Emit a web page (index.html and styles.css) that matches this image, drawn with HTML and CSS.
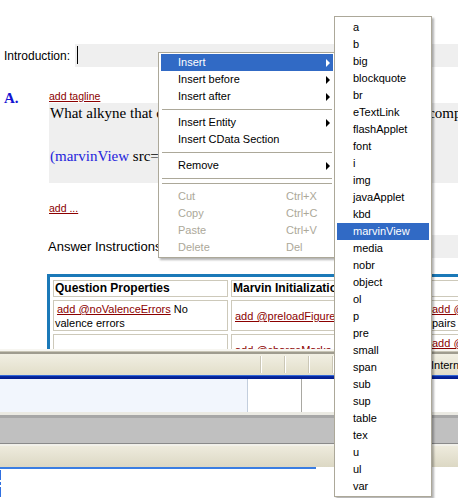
FILE: index.html
```html
<!DOCTYPE html>
<html lang="en">
<head>
    <meta charset="UTF-8">
    <meta name="viewport" content="width=device-width, initial-scale=1.0">
    <title>Question Editor</title>
    <link rel="stylesheet" href="styles.css">
</head>
<body>
    <div class="editor">
        <div class="doc">
            <div class="intro-row">
                <span class="field-label">Introduction:</span>
                <div class="field"><span class="caret"></span></div>
            </div>

            <div class="question">
                <div class="q-num">A.</div>
                <div class="q-body">
                    <a class="add-link" href="#">add tagline</a>
                    <div class="q-text">
                        <p>What alkyne that can be catalytically hydrogenated to give the compound shown?</p>
                        <p class="q-tag"><span class="tag">(marvinView</span> src="structure.mrv"</p>
                    </div>
                    <a class="add-link add-more" href="#">add ...</a>

                    <div class="answer-row">
                        <span class="answer-label">Answer Instructions</span>
                        <div class="field answer-field"></div>
                    </div>

                    <table class="props">
                        <tr>
                            <th class="col-props">Question Properties</th>
                            <th class="col-init">Marvin Initialization</th>
                            <th class="col-disp"></th>
                        </tr>
                        <tr>
                            <td><a class="add-link cell-link" href="#">add @noValenceErrors</a> No valence errors</td>
                            <td><a class="add-link cell-link" href="#">add @preloadFigure</a></td>
                            <td><a class="add-link" href="#">add @lonePairs</a> Show lone<br>pairs</td>
                        </tr>
                        <tr>
                            <td>&nbsp;</td>
                            <td><a class="add-link cell-link" href="#">add @chargeMarks</a></td>
                            <td><a class="add-link" href="#">add @implicitH</a><br>Implicit H</td>
                        </tr>
                    </table>
                </div>
            </div>
        </div>

        <div class="panel">
            <div class="p-edge"></div>
            <div class="p-edge-dark"></div>
            <div class="toolbar">
                <span class="tb-btn"></span>
                <span class="tb-btn"></span>
                <span class="tb-btn"></span>
                <span class="tb-btn"></span>
                <span class="tb-label">Internet</span>
            </div>
            <div class="p-bluebar"></div>
            <div class="list-row">
                <div class="lr-a"></div>
                <div class="lr-b"></div>
                <div class="lr-c"></div>
            </div>
            <div class="p-light"></div>
            <div class="p-mid"></div>
            <div class="p-gray"></div>
            <div class="p-groove"></div>
            <div class="p-beige"></div>
            <div class="p-blueline"></div>
            <div class="p-white">
                <div class="marks">
                    <span class="mark m1"></span>
                    <span class="mark m2"></span>
                    <span class="mark m3"></span>
                </div>
            </div>
        </div>
    </div>

    <!-- context menu -->
    <div class="menu">
        <div class="menu-item active has-sub">Insert</div>
        <div class="menu-item has-sub">Insert before</div>
        <div class="menu-item has-sub">Insert after</div>
        <div class="menu-sep"></div>
        <div class="menu-item has-sub">Insert Entity</div>
        <div class="menu-item">Insert CData Section</div>
        <div class="menu-sep"></div>
        <div class="menu-item has-sub">Remove</div>
        <div class="menu-sep"></div>
        <div class="menu-sep"></div>
        <div class="menu-item disabled">Cut<span class="key">Ctrl+X</span></div>
        <div class="menu-item disabled">Copy<span class="key">Ctrl+C</span></div>
        <div class="menu-item disabled">Paste<span class="key">Ctrl+V</span></div>
        <div class="menu-item disabled">Delete<span class="key">Del</span></div>
    </div>

    <!-- Insert submenu -->
    <div class="menu submenu">
        <div class="menu-item">a</div>
        <div class="menu-item">b</div>
        <div class="menu-item">big</div>
        <div class="menu-item">blockquote</div>
        <div class="menu-item">br</div>
        <div class="menu-item">eTextLink</div>
        <div class="menu-item">flashApplet</div>
        <div class="menu-item">font</div>
        <div class="menu-item">i</div>
        <div class="menu-item">img</div>
        <div class="menu-item">javaApplet</div>
        <div class="menu-item">kbd</div>
        <div class="menu-item active">marvinView</div>
        <div class="menu-item">media</div>
        <div class="menu-item">nobr</div>
        <div class="menu-item">object</div>
        <div class="menu-item">ol</div>
        <div class="menu-item">p</div>
        <div class="menu-item">pre</div>
        <div class="menu-item">small</div>
        <div class="menu-item">span</div>
        <div class="menu-item">sub</div>
        <div class="menu-item">sup</div>
        <div class="menu-item">table</div>
        <div class="menu-item">tex</div>
        <div class="menu-item">u</div>
        <div class="menu-item">ul</div>
        <div class="menu-item">var</div>
    </div>
</body>
</html>
```

FILE: styles.css
```css
body {
    margin: 0;
    background: #fff;
    color: #000;
    font-family: "Liberation Sans", Arial, sans-serif;
    overflow: hidden;
}
.editor {
    height: 498px;
    display: flex;
    flex-direction: column;
    overflow: hidden;
}

/* document area */
.doc {
    height: 349px;
    flex-shrink: 0;
    overflow: hidden;
    padding: 44px 0 0 4px;
    box-sizing: border-box;
}
.intro-row {
    display: flex;
    align-items: center;
    height: 23px;
}
.field-label {
    font-size: 12px;
    margin-right: 5px;
}
.field {
    flex: 1;
    align-self: stretch;
    background: #efefef;
}
.caret {
    display: block;
    width: 1px;
    height: 18px;
    margin: 2px 0 0 2px;
    background: #000;
}

.question {
    display: grid;
    grid-template-columns: 45px 1fr;
    margin-top: 23px;
}
.q-num {
    font: bold 15px/17px "Liberation Serif", "Times New Roman", serif;
    color: #1414d2;
}
.q-body {
    min-width: 0;
}
.add-link {
    font-size: 10.5px;
    line-height: 13px;
    color: #8b0000;
    text-decoration: underline;
}
.q-body > .add-link {
    display: block;
}
.q-text {
    background: #efefef;
    padding: 2px 1px 18px;
    font: 15px/17px "Liberation Serif", "Times New Roman", serif;
}
.q-text p {
    margin: 0;
    white-space: nowrap;
}
.q-text .q-tag {
    margin-top: 26px;
}
.tag {
    color: #2424dc;
}
.add-more {
    margin-top: 19px;
}

.answer-row {
    display: flex;
    align-items: center;
    height: 23px;
    margin-top: 20px;
}
.answer-label {
    font-size: 13px;
    margin-left: -1px;
    white-space: nowrap;
}
.answer-field {
    margin-left: 6px;
}

/* properties table */
.props {
    margin: 16px 0 0 -2px;
    border: 3px solid #1b79b8;
    border-spacing: 3px;
    table-layout: fixed;
    width: 550px;
}
.props th,
.props td {
    border: 1px solid #cdc9ba;
    box-sizing: border-box;
    text-align: left;
    vertical-align: middle;
    white-space: nowrap;
}
.props th {
    font-size: 12px;
    line-height: 15px;
    padding: 0 1px;
}
.props td {
    font-size: 11px;
    line-height: 14px;
    padding: 1px 1px 0;
    white-space: normal;
}
.props .add-link {
    font-size: 11px;
    line-height: 14px;
}
.col-props { width: 175px; }
.col-init { width: 196px; }
.col-disp { width: 170px; }
.cell-link {
    margin-left: 2px;
}

/* lower window strips */
.panel {
    flex: 1;
    display: flex;
    flex-direction: column;
}
.p-edge {
    height: 2px;
    background: #f7f6f1;
}
.p-edge-dark {
    height: 3px;
    background: linear-gradient(#c8c5b6 0, #c8c5b6 1px, #9f9c8f 1px);
}
.toolbar {
    height: 21px;
    display: flex;
    align-items: center;
    padding-left: 261px;
    background: linear-gradient(#f1efe3, #e2dec9);
    font-size: 11px;
    white-space: nowrap;
}
.tb-btn {
    flex-shrink: 0;
    width: 24px;
    height: 17px;
    box-sizing: border-box;
    border-left: 1px solid #fff;
    box-shadow: -1px 0 #cbc7b6;
}
.tb-label {
    flex-shrink: 0;
    margin-left: 74px;
}
.p-bluebar {
    height: 4px;
    background: linear-gradient(#3267d6 0, #3267d6 1px, #0a2ca4 1px, #001a8a 4px);
}
.list-row {
    height: 33px;
    display: flex;
}
.lr-a {
    width: 247px;
    background: #f2f6fd;
    border-right: 1px solid #c3cedd;
}
.lr-b {
    width: 53px;
    border-right: 1px solid #a9a8a2;
}
.lr-c {
    flex: 1;
}
.p-light {
    height: 3px;
    background: #ebeae3;
}
.p-mid {
    height: 3px;
    background: #a7a7a7;
}
.p-gray {
    height: 25px;
    background: #c0c0c0;
}
.p-groove {
    height: 3px;
    background: linear-gradient(#8a8a8a 0, #8a8a8a 1px, #f2f1ea 1px);
}
.p-beige {
    height: 21px;
    background: linear-gradient(#eeebdd, #dcd8c4);
}
.p-blueline {
    height: 2px;
    width: 316px;
    background: #3a7de2;
}
.p-white {
    flex: 1;
}
.marks {
    display: flex;
    flex-direction: column;
    gap: 2px;
    width: 1px;
    padding-top: 1px;
}
.mark {
    display: block;
    background: #2f6fe0;
}
.m1 { height: 10px; }
.m2 { height: 3px; }
.m3 { height: 10px; }

/* context menus */
.menu {
    position: absolute;
    left: 158px;
    top: 52px;
    width: 178px;
    box-sizing: border-box;
    padding: 1px 2px;
    background: #fff;
    border: 1px solid #aca899;
    box-shadow: 2px 2px 2px rgba(0, 0, 0, 0.3);
    font-size: 11px;
    z-index: 1;
}
.menu-item {
    position: relative;
    height: 17px;
    line-height: 17px;
    padding-left: 17px;
    white-space: nowrap;
}
.menu-item.active {
    background: #316ac5;
    color: #fff;
}
.menu-item.disabled {
    color: #aca899;
}
.menu-item .key {
    position: absolute;
    left: 125px;
}
.has-sub::after {
    content: "";
    position: absolute;
    right: 3px;
    top: 5px;
    border-left: 4px solid #000;
    border-top: 4px solid transparent;
    border-bottom: 4px solid transparent;
}
.has-sub.active::after {
    border-left-color: #fff;
}
.menu-sep {
    height: 1px;
    margin: 4px 1px;
    background: #aca899;
}
.submenu {
    left: 334px;
    top: 16px;
    width: 98px;
    padding: 2px 2px 1px;
    z-index: 2;
}
.submenu .menu-item {
    padding-left: 16px;
}
```
